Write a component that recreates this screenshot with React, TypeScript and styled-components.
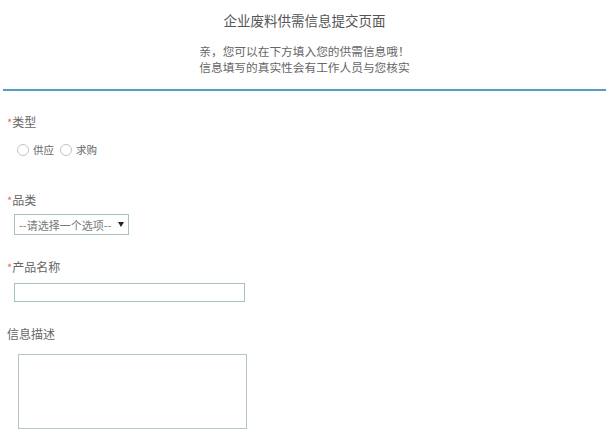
import styled, { createGlobalStyle } from "styled-components";

const FONT = `"Noto Sans CJK SC", "Liberation Sans", sans-serif`;

const Global = createGlobalStyle`
  html, body {
    margin: 0;
    padding: 0;
    background: #ffffff;
    font-family: ${FONT};
  }
`;

const Page = styled.main`
  width: 609px;
  min-height: 444px;
`;

const Header = styled.header`
  padding-top: 10px;
  text-align: center;
`;

const Title = styled.h1`
  margin: 0;
  font-size: 13.5px;
  line-height: 20px;
  font-weight: 400;
  color: #555;
`;

const Intro = styled.p`
  margin: 13px 0 0;
  font-size: 11.7px;
  line-height: 16px;
  color: #666;
`;

const Divider = styled.hr`
  margin: 14px 3px 0;
  height: 2px;
  border: 0;
  background: #5b9dc2;
  box-shadow: 0 0 1px #bfe3f2;
`;

const Form = styled.form`
  padding: 0 0 0 7px;
`;

const Field = styled.div<{ $top: number }>`
  margin-top: ${({ $top }) => $top}px;
  display: flex;
  flex-direction: column;
  align-items: flex-start;
`;

const Label = styled.label<{ $required?: boolean }>`
  font-size: 12px;
  line-height: 16px;
  color: #666;

  &::before {
    content: ${({ $required }) => ($required ? '"*"' : "none")};
    color: #e07070;
    font-size: 11px;
  }
`;

const RadioRow = styled.div`
  margin: 14px 0 0 10px;
  display: flex;
  align-items: center;
  gap: 6px;
`;

const RadioOption = styled.label`
  display: flex;
  align-items: center;
  gap: 4px;
  font-size: 10.5px;
  line-height: 12px;
  color: #666;
`;

const Radio = styled.input`
  appearance: none;
  margin: 0;
  width: 12px;
  height: 12px;
  border: 1px solid #c4c4c4;
  border-radius: 50%;
  background: #fff;
`;

const SelectWrap = styled.div`
  position: relative;
  margin: 6px 0 0 7px;
  width: 115px;
  height: 21px;
`;

const Select = styled.select`
  display: block;
  appearance: none;
  box-sizing: border-box;
  width: 100%;
  height: 100%;
  margin: 0;
  padding: 0 0 0 4px;
  border: 1px solid #a9c0c0;
  border-radius: 0;
  background: #fff;
  font-family: ${FONT};
  font-size: 11px;
  color: #777;
`;

const Arrow = styled.span`
  position: absolute;
  right: 5px;
  top: 8px;
  width: 0;
  height: 0;
  border-left: 3px solid transparent;
  border-right: 3px solid transparent;
  border-top: 5px solid #222;
  pointer-events: none;
`;

const TextInput = styled.input`
  box-sizing: border-box;
  margin: 8px 0 0 7px;
  width: 231px;
  height: 19px;
  border: 1px solid #a9c0c0;
  background: #fff;
`;

const TextArea = styled.textarea`
  box-sizing: border-box;
  margin: 12px 0 0 11px;
  width: 229px;
  height: 75px;
  border: 1px solid #b3c6c4;
  background: #fff;
  resize: none;
`;

export default function App() {
  return (
    <Page>
      <Global />
      <Header>
        <Title>企业废料供需信息提交页面</Title>
        <Intro>
          亲，您可以在下方填入您的供需信息哦！
          <br />
          信息填写的真实性会有工作人员与您核实
        </Intro>
      </Header>
      <Divider />
      <Form>
        <Field $top={23}>
          <Label $required>类型</Label>
          <RadioRow>
            <RadioOption>
              <Radio type="radio" name="kind" />
              供应
            </RadioOption>
            <RadioOption>
              <Radio type="radio" name="kind" />
              求购
            </RadioOption>
          </RadioRow>
        </Field>
        <Field $top={36}>
          <Label $required>品类</Label>
          <SelectWrap>
            <Select defaultValue="">
              <option value="">--请选择一个选项--</option>
            </Select>
            <Arrow />
          </SelectWrap>
        </Field>
        <Field $top={24}>
          <Label $required>产品名称</Label>
          <TextInput type="text" />
        </Field>
        <Field $top={24}>
          <Label>信息描述</Label>
          <TextArea />
        </Field>
      </Form>
    </Page>
  );
}
